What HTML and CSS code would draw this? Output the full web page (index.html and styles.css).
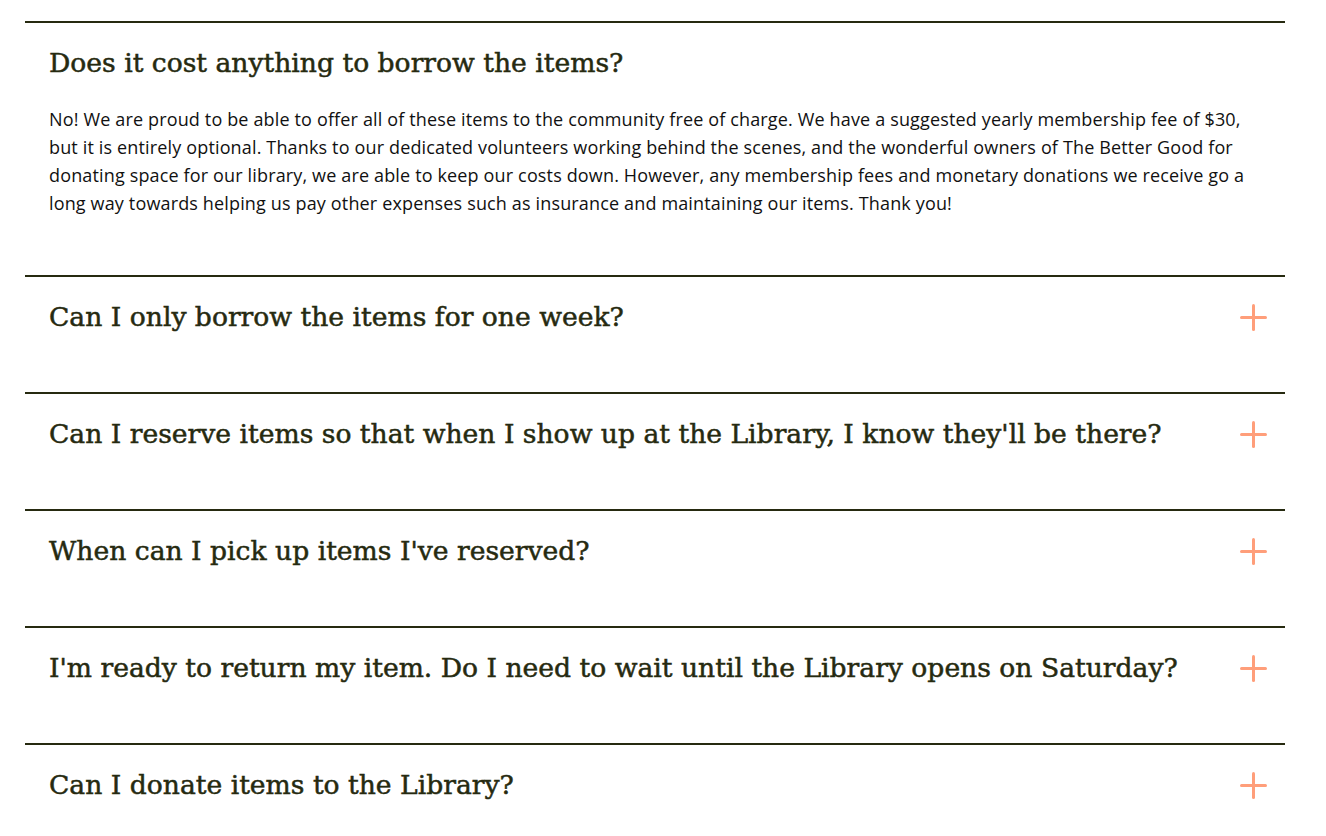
FILE: index.html
```html
<!DOCTYPE html>
<html lang="en">
<head>
<meta charset="utf-8">
<title>FAQ</title>
<link rel="stylesheet" href="styles.css">
</head>
<body>
<div class="faq">
  <div class="item open">
    <div class="q"><h3>Does it cost anything to borrow the items?</h3></div>
    <p class="a">No! We are proud to be able to offer all of these items to the community free of charge. We have a suggested yearly membership fee of $30, but it is entirely optional. Thanks to our dedicated volunteers working behind the scenes, and the wonderful owners of The Better Good for donating space for our library, we are able to keep our costs down. However, any membership fees and monetary donations we receive go a long way towards helping us pay other expenses such as insurance and maintaining our items. Thank you!</p>
  </div>
  <div class="item">
    <div class="q"><h3>Can I only borrow the items for one week?</h3><span class="plus"></span></div>
  </div>
  <div class="item">
    <div class="q"><h3>Can I reserve items so that when I show up at the Library, I know they'll be there?</h3><span class="plus"></span></div>
  </div>
  <div class="item">
    <div class="q"><h3>When can I pick up items I've reserved?</h3><span class="plus"></span></div>
  </div>
  <div class="item">
    <div class="q"><h3>I'm ready to return my item. Do I need to wait until the Library opens on Saturday?</h3><span class="plus"></span></div>
  </div>
  <div class="item">
    <div class="q"><h3>Can I donate items to the Library?</h3><span class="plus"></span></div>
  </div>
</div>
</body>
</html>
```

FILE: styles.css
```css
html, body {
  margin: 0;
  padding: 0;
  background: #ffffff;
}
body {
  padding: 21px 41px 0 25px;
}
.faq {
  display: flex;
  flex-direction: column;
}
.item {
  border-top: 2px solid #262a10;
  padding: 22px 18px 57px 24px;
}
.q {
  display: flex;
  align-items: center;
  justify-content: space-between;
  gap: 16px;
}
.q h3 {
  margin: 0;
  font-family: "DejaVu Serif", "Liberation Serif", serif;
  font-weight: normal;
  font-size: 26.6px;
  line-height: 36px;
  color: #262a10;
  -webkit-text-stroke: 0.5px #262a10;
}
.plus {
  position: relative;
  flex: 0 0 27px;
  width: 27px;
  height: 27px;
}
.plus::before,
.plus::after {
  content: "";
  position: absolute;
  background: #ff9e7a;
  border-radius: 2px;
}
.plus::before {
  left: 0;
  right: 0;
  top: 12px;
  height: 3px;
}
.plus::after {
  top: 0;
  bottom: 0;
  left: 12px;
  width: 3px;
}
.a {
  margin: 24px 0 1px 0;
  max-width: 1212px;
  font-family: "Open Sans", "Liberation Sans", sans-serif;
  font-size: 18px;
  letter-spacing: 0.15px;
  line-height: 28px;
  color: #111111;
}
```
